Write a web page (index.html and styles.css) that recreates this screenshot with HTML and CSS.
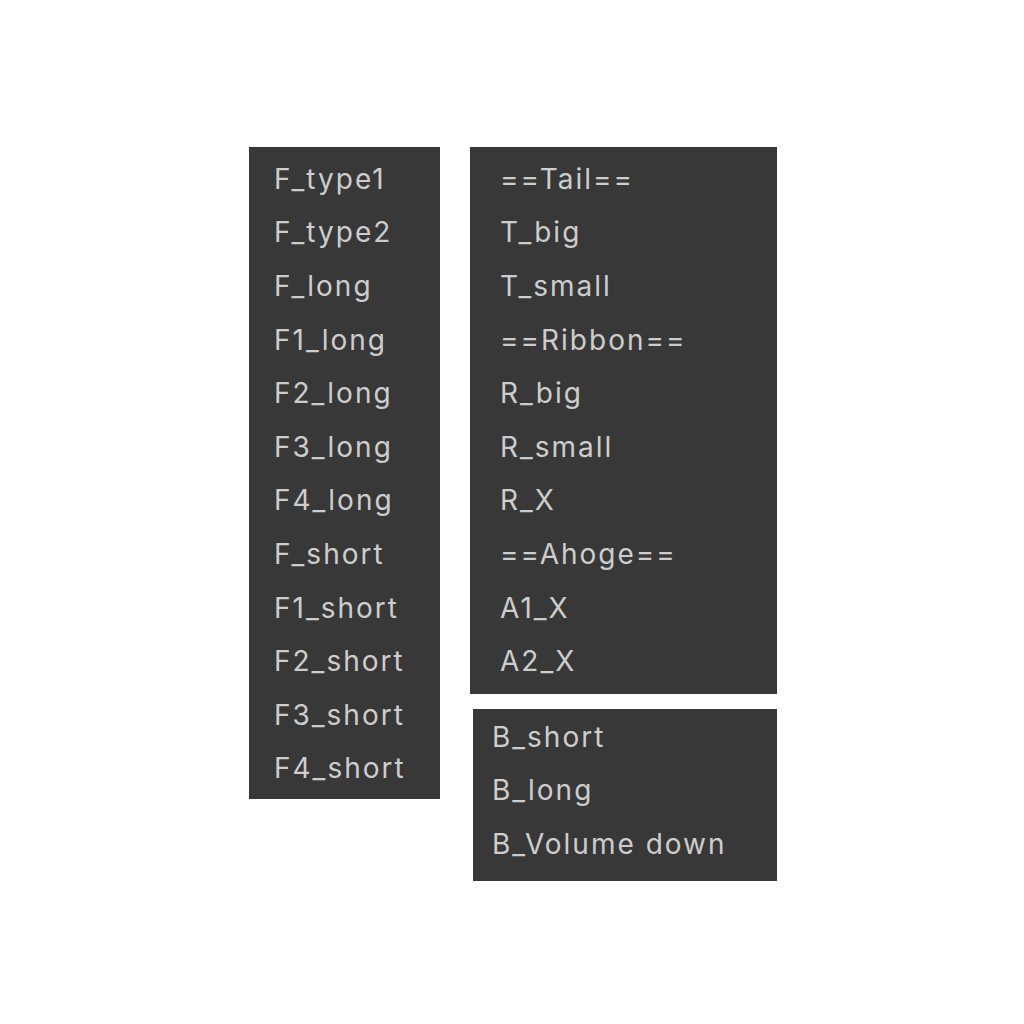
FILE: index.html
```html
<!DOCTYPE html>
<html>
<head>
<meta charset="utf-8">
<link rel="stylesheet" href="styles.css">
</head>
<body>
<div class="stage">
  <ul class="panel panel-f">
    <li>F_type1</li>
    <li>F_type2</li>
    <li>F_long</li>
    <li>F1_long</li>
    <li>F2_long</li>
    <li>F3_long</li>
    <li>F4_long</li>
    <li>F_short</li>
    <li>F1_short</li>
    <li>F2_short</li>
    <li>F3_short</li>
    <li>F4_short</li>
  </ul>
  <div class="col">
    <ul class="panel panel-t">
      <li>==Tail==</li>
      <li>T_big</li>
      <li>T_small</li>
      <li>==Ribbon==</li>
      <li>R_big</li>
      <li>R_small</li>
      <li>R_X</li>
      <li>==Ahoge==</li>
      <li>A1_X</li>
      <li>A2_X</li>
    </ul>
    <ul class="panel panel-b">
      <li>B_short</li>
      <li>B_long</li>
      <li>B_Volume down</li>
    </ul>
  </div>
</div>
</body>
</html>
```

FILE: styles.css
```css
html, body {
  margin: 0;
  padding: 0;
  background: #ffffff;
}
body {
  width: 1024px;
  height: 1024px;
  font-family: Inter, "Liberation Sans", sans-serif;
}
.stage {
  display: flex;
  align-items: flex-start;
  gap: 30px;
  padding-top: 147px;
  padding-left: 249px;
}
.col {
  display: flex;
  flex-direction: column;
  gap: 15px;
}
.panel {
  list-style: none;
  margin: 0;
  background: #383838;
  color: #cdcdcd;
  font-size: 28px;
  font-weight: 400;
  letter-spacing: 2px;
}
.panel li {
  height: 53.6px;
  display: flex;
  align-items: center;
  white-space: nowrap;
}
.panel-f {
  width: 191px;
  box-sizing: border-box;
  padding: 5px 0 4px 25px;
}
.panel-t {
  width: 307px;
  box-sizing: border-box;
  padding: 5px 0 6px 30px;
}
.panel-b {
  width: 304px;
  margin-left: 3px;
  box-sizing: border-box;
  padding: 1px 0 10px 19px;
}
```
